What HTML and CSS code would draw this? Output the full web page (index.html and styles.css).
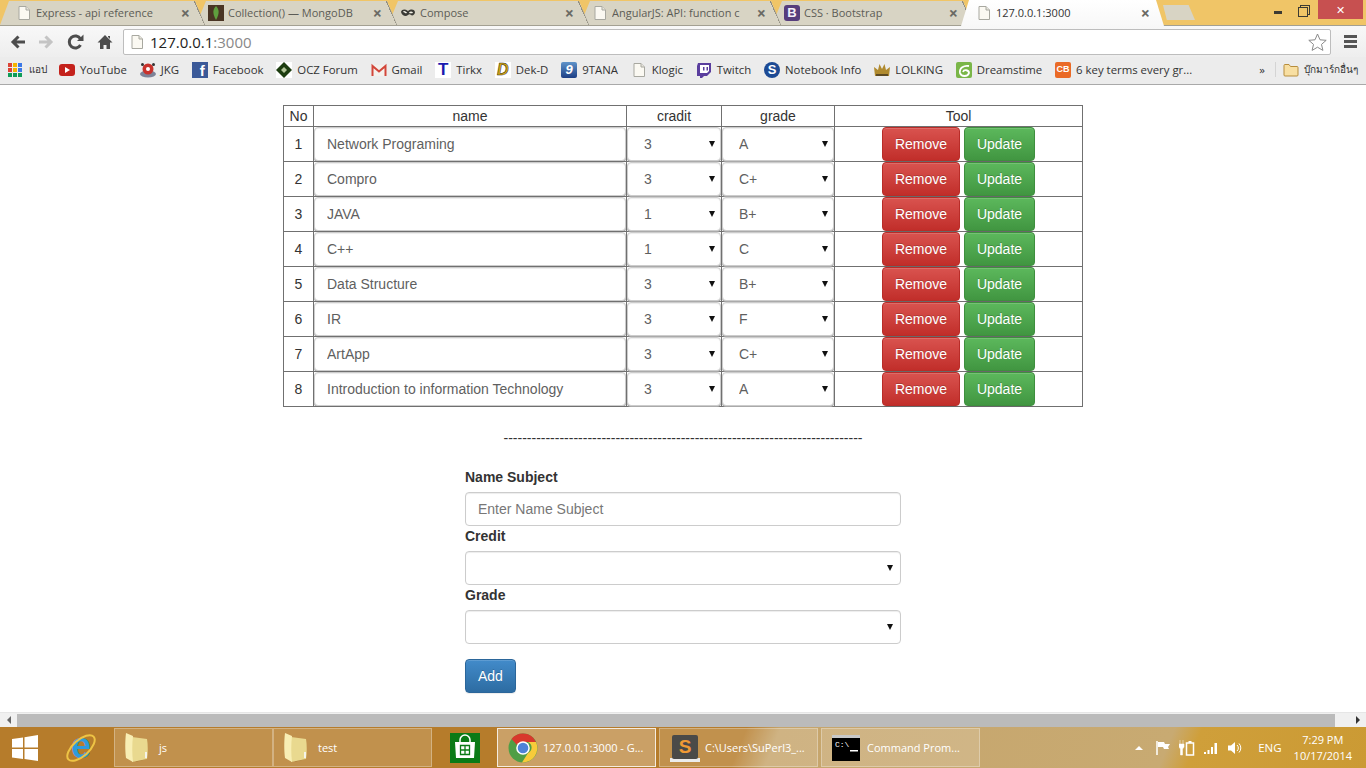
FILE: index.html
```html
<!DOCTYPE html>
<html>
<head>
  <meta charset="utf-8">
  <title>127.0.0.1:3000</title>
  <link rel="stylesheet" href="styles.css">
</head>
<body>
<svg class="defs" width="0" height="0">
  <symbol id="doc" viewBox="0 0 16 16"><path d="M3 1.5h7l3.500 3.500v9.500h-10.500z" fill="#fbf9f2" stroke="#a8a8a0"/><path d="M10 1.500v3.500h3.500" fill="#e8e6dc" stroke="#a8a8a0"/></symbol>
  <symbol id="folder" viewBox="0 0 24 32"><path d="M10 30l12-3-2-4z" fill="#8a5f24" opacity=".5"/><path d="M7 5l15 2c1 6 1 14 0 20l-15 3z" fill="#e9d98f"/><path d="M1 1l7 3c-1 8-1 18 0 26l-7-4c-1-7-1-17 0-25z" fill="#f8eeb4"/><rect x="20" y="20" width="2" height="6" fill="#f4f4ea"/></symbol>
</svg>

<div class="tabstrip">
  <div class="tab"><svg class="fav"><use href="#doc"/></svg><span class="tab-title">Express - api reference</span><span class="tab-x">×</span></div>
  <div class="tab"><svg class="fav" viewBox="0 0 16 16"><rect width="16" height="16" fill="#4a3524"/><path d="M8 1c3 3 4 7 0 14-4-7-3-11 0-14z" fill="#5f9e3e"/></svg><span class="tab-title">Collection() — MongoDB</span><span class="tab-x">×</span></div>
  <div class="tab"><svg class="fav" viewBox="0 0 16 16"><path d="M1 7c1-3 4-3 7-1 3-2 6-2 7 1 0 3-3 4-4 3-1-1-2-1-3 0-2 2-6 1-7-3z" fill="#3b3b36"/><path d="M3.500 7c1-1 2 0 3 1M9.500 8c1-1 2-1 3 0" stroke="#f4f2e8" stroke-width="1.500" fill="none"/></svg><span class="tab-title">Compose</span><span class="tab-x">×</span></div>
  <div class="tab"><svg class="fav"><use href="#doc"/></svg><span class="tab-title">AngularJS: API: function c</span><span class="tab-x">×</span></div>
  <div class="tab"><span class="fav fav-txt fav-boot">B</span><span class="tab-title">CSS · Bootstrap</span><span class="tab-x">×</span></div>
  <div class="tab tab-on"><svg class="fav"><use href="#doc"/></svg><span class="tab-title">127.0.0.1:3000</span><span class="tab-x">×</span></div>
  <div class="tab-new"></div>
  <div class="winbtns">
    <span class="win-min"></span>
    <span class="win-max"></span>
    <span class="win-close">✕</span>
  </div>
</div>

<div class="toolbar">
  <svg class="tool" width="16" height="16" viewBox="0 0 16 16"><path d="M15 8H4M8.500 2.500L3 8l5.500 5.500" stroke="#4d4d4d" stroke-width="3" fill="none"/></svg>
  <svg class="tool" width="16" height="16" viewBox="0 0 16 16"><path d="M1 8h11M7.500 2.500L13 8l-5.500 5.500" stroke="#c4c4c4" stroke-width="3" fill="none"/></svg>
  <svg class="tool" width="17" height="16" viewBox="0 0 17 16"><path d="M13.500 11a6 6 0 1 1 0-6" stroke="#4d4d4d" stroke-width="3" fill="none"/><path d="M10 7h6.500V.5z" fill="#4d4d4d"/></svg>
  <svg class="tool" width="16" height="16" viewBox="0 0 16 16"><path d="M8 1L0.500 8.500H3V15h3.500v-4h3v4H13V8.500h2.500zM11 2h2v3l-2-2z" fill="#4d4d4d"/></svg>
  <div class="omnibox">
    <svg class="fav"><use href="#doc"/></svg>
    <span class="url">127.0.0.1<span class="url-port">:3000</span></span>
    <svg class="star" width="19" height="18" viewBox="0 0 19 18"><path d="M9.500 1l2.500 5.800 6.200.5-4.700 4.100 1.400 6-5.400-3.200-5.400 3.200 1.400-6L.8 7.300 7 6.800z" fill="#fff" stroke="#8a8a8a"/></svg>
  </div>
  <div class="hamburger"><i></i><i></i><i></i></div>
</div>

<div class="bookmarks">
  <a class="bm bm-apps"><span class="apps-grid"><i></i><i></i><i></i><i></i><i></i><i></i><i></i><i></i><i></i></span>แอป</a>
  <a class="bm"><svg class="fav" viewBox="0 0 16 16"><rect y="2" width="16" height="12" rx="3" fill="#c4221c"/><path d="M6 5l5 3-5 3z" fill="#fff"/></svg>YouTube</a>
  <a class="bm"><svg class="fav" viewBox="0 0 16 16"><ellipse cx="8" cy="12" rx="8" ry="3.500" fill="#7d8398"/><circle cx="8" cy="7" r="5.500" fill="#c8322c"/><circle cx="8" cy="7" r="2" fill="#fff"/><circle cx="2.500" cy="2.500" r="1.500" fill="#333"/><circle cx="13.500" cy="2.500" r="1.500" fill="#333"/></svg>JKG</a>
  <a class="bm"><span class="fav fav-txt fav-fb">f</span>Facebook</a>
  <a class="bm"><svg class="fav" viewBox="0 0 16 16"><rect width="16" height="16" fill="#fff"/><path d="M8 0l8 8-8 8-8-8z" fill="#1d3d10"/><path d="M8 5l3 3-3 3-3-3z" fill="#b4c69a"/></svg>OCZ Forum</a>
  <a class="bm"><svg class="fav" viewBox="0 0 16 16"><path d="M0.500 3h15v11h-15z" fill="#f4f0ec"/><path d="M1.500 14V4L8 9.500 14.500 4v10" fill="none" stroke="#d2463a" stroke-width="2"/></svg>Gmail</a>
  <a class="bm"><span class="fav fav-txt fav-t">T</span>Tirkx</a>
  <a class="bm"><span class="fav fav-txt fav-dek">D</span>Dek-D</a>
  <a class="bm"><span class="fav fav-txt fav-9">9</span>9TANA</a>
  <a class="bm"><svg class="fav"><use href="#doc"/></svg>Klogic</a>
  <a class="bm"><svg class="fav" viewBox="0 0 16 16"><path d="M2 1h13v9l-4 4H8l-2 2H4v-2H1V4z" fill="#5a3e9e"/><path d="M4 3h9v6l-2 2H4z" fill="#fff"/><path d="M7 5h1.500v3.500H7zM10.500 5H12v3.500h-1.500z" fill="#5a3e9e"/></svg>Twitch</a>
  <a class="bm"><span class="fav fav-txt fav-s">S</span>Notebook Info</a>
  <a class="bm"><svg class="fav" viewBox="0 0 16 16"><path d="M1 14L0 5l4 3 1.500-6L8 7l2.500-5L12 8l4-3-1 9z" fill="#b08a2e"/><path d="M2 12h12v2H2z" fill="#5d4a22"/></svg>LOLKING</a>
  <a class="bm"><svg class="fav" viewBox="0 0 16 16"><rect width="16" height="16" rx="2" fill="#7ab648"/><path d="M13 4C8 3 3 6 4 11c1 4 8 4 9 0 0-3-5-4-6-1" fill="none" stroke="#fff" stroke-width="1.800"/></svg>Dreamstime</a>
  <a class="bm"><span class="fav fav-txt fav-cb">CB</span>6 key terms every gr...</a>
  <span class="bm-more">»</span>
  <a class="bm bm-other"><svg class="fav" viewBox="0 0 16 16"><path d="M1 3.500a1 1 0 0 1 1-1h4l1.500 2H14a1 1 0 0 1 1 1v7.500a1 1 0 0 1-1 1H2a1 1 0 0 1-1-1z" fill="#f8dfa2" stroke="#b78d3c"/></svg>บุ๊กมาร์กอื่นๆ</a>
</div>

<div class="page">
  <table class="grades">
    <thead>
      <tr><th class="col-no">No</th><th class="col-name">name</th><th class="col-credit">cradit</th><th class="col-grade">grade</th><th>Tool</th></tr>
    </thead>
    <tbody>
      <tr><td>1</td><td><input class="ctl" value="Network Programing"></td><td><div class="pick"><select class="ctl"><option>3</option></select></div></td><td><div class="pick"><select class="ctl"><option>A</option></select></div></td><td><button class="btn btn-red">Remove</button> <button class="btn btn-green">Update</button></td></tr>
      <tr><td>2</td><td><input class="ctl" value="Compro"></td><td><div class="pick"><select class="ctl"><option>3</option></select></div></td><td><div class="pick"><select class="ctl"><option>C+</option></select></div></td><td><button class="btn btn-red">Remove</button> <button class="btn btn-green">Update</button></td></tr>
      <tr><td>3</td><td><input class="ctl" value="JAVA"></td><td><div class="pick"><select class="ctl"><option>1</option></select></div></td><td><div class="pick"><select class="ctl"><option>B+</option></select></div></td><td><button class="btn btn-red">Remove</button> <button class="btn btn-green">Update</button></td></tr>
      <tr><td>4</td><td><input class="ctl" value="C++"></td><td><div class="pick"><select class="ctl"><option>1</option></select></div></td><td><div class="pick"><select class="ctl"><option>C</option></select></div></td><td><button class="btn btn-red">Remove</button> <button class="btn btn-green">Update</button></td></tr>
      <tr><td>5</td><td><input class="ctl" value="Data Structure"></td><td><div class="pick"><select class="ctl"><option>3</option></select></div></td><td><div class="pick"><select class="ctl"><option>B+</option></select></div></td><td><button class="btn btn-red">Remove</button> <button class="btn btn-green">Update</button></td></tr>
      <tr><td>6</td><td><input class="ctl" value="IR"></td><td><div class="pick"><select class="ctl"><option>3</option></select></div></td><td><div class="pick"><select class="ctl"><option>F</option></select></div></td><td><button class="btn btn-red">Remove</button> <button class="btn btn-green">Update</button></td></tr>
      <tr><td>7</td><td><input class="ctl" value="ArtApp"></td><td><div class="pick"><select class="ctl"><option>3</option></select></div></td><td><div class="pick"><select class="ctl"><option>C+</option></select></div></td><td><button class="btn btn-red">Remove</button> <button class="btn btn-green">Update</button></td></tr>
      <tr><td>8</td><td><input class="ctl" value="Introduction to information Technology"></td><td><div class="pick"><select class="ctl"><option>3</option></select></div></td><td><div class="pick"><select class="ctl"><option>A</option></select></div></td><td><button class="btn btn-red">Remove</button> <button class="btn btn-green">Update</button></td></tr>
    </tbody>
  </table>

  <div class="dashes">-----------------------------------------------------------------------------</div>

  <form class="add-form">
    <label>Name Subject</label>
    <input class="ctl ctl-form" placeholder="Enter Name Subject">
    <label>Credit</label>
    <div class="pick"><select class="ctl ctl-form"><option></option></select></div>
    <label>Grade</label>
    <div class="pick"><select class="ctl ctl-form"><option></option></select></div>
    <button type="button" class="btn btn-blue">Add</button>
  </form>
</div>

<div class="hscroll">
  <span class="arrow-left"></span>
  <div class="hscroll-track"><div class="hscroll-thumb"></div></div>
  <span class="arrow-right"></span>
</div>

<div class="taskbar">
  <svg class="win-logo" width="26" height="26" viewBox="0 0 26 26"><path d="M0 4l11-1.500V12.500H0zM12.500 2.200L26 0v12.500H12.500zM0 14h11v10L0 22.500zM12.500 14H26v12l-13.500-2z" fill="#fff"/></svg>
  <svg class="ie-logo" width="30" height="32" viewBox="0 0 30 32"><text x="15" y="26" text-anchor="middle" class="ie-e">e</text><ellipse cx="15" cy="16" rx="17" ry="8" transform="rotate(-42 15 16)" fill="none" stroke="#eec445" stroke-width="2"/></svg>
  <div class="task task-first"><svg class="task-folder"><use href="#folder"/></svg><span>js</span></div>
  <div class="task"><svg class="task-folder"><use href="#folder"/></svg><span>test</span></div>
  <svg class="store" width="30" height="30" viewBox="0 0 30 30"><rect width="30" height="30" fill="#0b7a16"/><path d="M10 9V7a5 5 0 0 1 10 0v2" fill="none" stroke="#fff" stroke-width="1.500"/><path d="M5 9h20l-1 16H6z" fill="#fff"/><path d="M10.500 12.500h9v9h-9zM15 12.500v9M10.500 17h9" fill="none" stroke="#0b7a16" stroke-width="1.300"/></svg>
  <div class="task task-on task-gap">
    <svg class="task-ico" width="30" height="30" viewBox="0 0 30 30"><circle cx="15" cy="15" r="14.500" fill="#4f9e45"/><path d="M15 .5A14.500 14.500 0 0 1 28 9H15a6 6 0 0 0-6 3L3.500 6A14.500 14.500 0 0 1 15 .5z" fill="#d8382c"/><path d="M28 9a14.500 14.500 0 0 1-14 20.500L20 20a6 6 0 0 0 0-11z" fill="#f7cb3a"/><circle cx="15" cy="15" r="6.800" fill="#fff"/><circle cx="15" cy="15" r="5.300" fill="#4d83d8"/></svg>
    <span>127.0.0.1:3000 - G...</span>
  </div>
  <div class="task task-gap">
    <svg class="task-ico" width="30" height="30" viewBox="0 0 30 30"><path d="M0 25h30v4H0z" fill="#ececec"/><rect x="2" y="2" width="26" height="24" rx="2" fill="#4a4a48"/><text x="15" y="20" text-anchor="middle" class="sublime-s">S</text></svg>
    <span>C:\Users\SuPerl3_...</span>
  </div>
  <div class="task">
    <svg class="task-ico" width="30" height="30" viewBox="0 0 30 30"><rect y="2" width="28" height="26" fill="#000"/><rect y="2" width="28" height="3" fill="#c8c8c8"/><path d="M18 17h8v1.500h-8z" fill="#fff"/></svg>
    <span class="cmd-prompt">C:\</span>
    <span>Command Prom...</span>
  </div>
  <div class="tray">
    <span class="tray-up"></span>
    <svg width="16" height="16" viewBox="0 0 16 16"><path d="M2 1v14" stroke="#fff" stroke-width="1.500"/><path d="M3 2h6l1 2h5l-2 3 1 2H9L8 7H3z" fill="#fff"/></svg>
    <svg width="16" height="16" viewBox="0 0 16 16"><path d="M1 0v4M4 0v4M0 4h5v3L3.500 9v6h-2V9L0 7z" fill="#fff" stroke="#fff" stroke-width=".5"/><path d="M7.500 3h7v12h-7z" fill="none" stroke="#fff" stroke-width="1.500"/><path d="M9.500 1h3v2h-3z" fill="#fff"/></svg>
    <svg width="16" height="16" viewBox="0 0 16 16"><path d="M1 12h2v2H1zM4.500 10h2v4h-2zM8 7h2v7H8zM11.500 3h2.500v11h-2.500z" fill="#fff"/></svg>
    <svg width="16" height="16" viewBox="0 0 16 16"><path d="M1 5.500h3L8 2v12l-4-3.500H1z" fill="#fff"/><path d="M10 5a4 4 0 0 1 0 6M12 3.500a6.500 6.500 0 0 1 0 9" fill="none" stroke="#fff"/></svg>
    <span class="tray-lang">ENG</span>
    <div class="clock"><div>7:29 PM</div><div>10/17/2014</div></div>
  </div>
</div>
</body>
</html>
```

FILE: styles.css
```css
* { box-sizing: border-box; }
html, body { height: 100%; }
body { margin: 0; display: flex; flex-direction: column; height: 768px; overflow: hidden; font-family: "Liberation Sans", Arial, sans-serif; font-size: 14px; color: #333; background: #fff; }
.defs { position: absolute; }
.fav { width: 16px; height: 16px; flex: none; display: block; }

/* tabs */
.tabstrip { height: 26px; flex: none; display: flex; align-items: flex-end; background: #f0c567; border-bottom: 1px solid #a3a092; font-family: "Open Sans", "Noto Sans", sans-serif; font-size: 11px; }
.tab { width: 205px; height: 24px; margin-right: -13px; padding: 0 15px 1px 16px; display: flex; align-items: center; color: #5c5c56; clip-path: polygon(4px 100%, 14px 0, 195px 0, 100% 100%); flex: none; position: relative; background: linear-gradient(to bottom left, transparent 46%, #8f8c80 46%, #8f8c80 52%, transparent 52%) no-repeat right top / 11px 24px, #d8d4c4; }
.tab:nth-child(1) { z-index: 5; clip-path: polygon(0 100%, 9px 0, 195px 0, 100% 100%); }
.tab:nth-child(2) { z-index: 4; }
.tab:nth-child(3) { z-index: 3; }
.tab:nth-child(4) { z-index: 2; }
.tab:nth-child(5) { z-index: 1; }
.tab-title { margin-left: 4px; width: 134px; white-space: nowrap; overflow: hidden; }
.tab-x { margin-left: auto; font-size: 16px; font-weight: 700; color: #6a6a64; line-height: 1; }
.tab-on { background: linear-gradient(#fff, #f8f8f8); color: #333; height: 26px; margin-bottom: -1px; padding-bottom: 1px; z-index: 6; clip-path: polygon(1px 100%, 9px 0, 196px 0, 204px 100%); }
.tab-new { width: 32px; height: 15px; margin-left: 11px; margin-bottom: 5px; background: #d8d4c4; clip-path: polygon(0 0, 80% 0, 100% 100%, 12% 100%); flex: none; }
.winbtns { margin-left: auto; align-self: flex-start; display: flex; align-items: flex-start; padding-right: 3px; }
.win-min { width: 8px; height: 3px; background: #3c3a32; margin: 11px 16px 0 0; }
.win-max { width: 10px; height: 10px; border: 1px solid #3c3a32; box-shadow: 2px -2px 0 -1px #f0c567, 2px -2px 0 0 #3c3a32; margin: 7px 10px 0 0; }
.win-close { width: 45px; height: 19px; background: #c75050; color: #fff; text-align: center; line-height: 19px; font-size: 11px; }
.fav-txt { display: flex; align-items: center; justify-content: center; font-family: "Liberation Sans", sans-serif; font-weight: 700; font-size: 13px; line-height: 1; }
.fav-boot { background: #563d7c; color: #f4f0f8; border-radius: 3px; }
.fav-fb { background: #3b5998; color: #fff; align-items: flex-end; justify-content: flex-end; padding-right: 3px; font-size: 15px; }
.fav-t { background: #fff; color: #1a1ab0; font-size: 17px; }
.fav-dek { background: #fff; color: #d9a90f; font-size: 16px; font-style: italic; -webkit-text-stroke: .5px #222; }
.fav-9 { background: linear-gradient(#5f93c9, #1d3f85); color: #fff; font-style: italic; border-radius: 2px; }
.fav-s { background: #1d4a94; color: #fff; border-radius: 50%; }
.fav-cb { background: #ea6a26; color: #fff; font-size: 9px; border-radius: 2px; }

/* toolbar */
.toolbar { height: 31px; flex: none; display: flex; align-items: center; padding: 0 9px 0 10px; background: linear-gradient(#f8f8f8, #eeeeee); }
.tool { margin-right: 13px; flex: none; }
.tool:first-child { margin-right: 12px; }
.tool:nth-child(4) { margin-right: 10px; }
.omnibox { flex: 1; height: 26px; margin-right: 13px; display: flex; align-items: center; padding: 0 3px 0 5px; background: #fff; border: 1px solid #bdbdbd; border-radius: 2px; }
.url { margin-left: 5px; font-family: "Open Sans", "Noto Sans", sans-serif; font-size: 15px; color: #222; }
.url-port { color: #888; }
.star { margin-left: auto; }
.hamburger { width: 13px; display: flex; flex-direction: column; gap: 2px; }
.hamburger i { height: 3px; background: #555; }

/* bookmarks */
.bookmarks { height: 28px; flex: none; display: flex; align-items: center; padding: 0 8px 2px; gap: 12.8px; background: #ececec; border-bottom: 1px solid #a9a9a9; font-family: "Open Sans", "Noto Sans", sans-serif; font-size: 11.4px; color: #333; white-space: nowrap; }
.bm { display: flex; align-items: center; gap: 5px; }
.apps-grid { width: 14px; height: 14px; display: grid; grid-template-columns: repeat(3, 4px); gap: 1px; flex: none; }
.apps-grid i:nth-child(3n) { background: #3b78e7; }
.apps-grid i:nth-child(3n+1) { background: #db4437; }
.apps-grid i:nth-child(3n+2) { background: #f4b400; }
.apps-grid i:nth-child(n+7) { background: #0f9d58; }
.bm-apps { font-size: 10px; gap: 7px; margin-right: -.8px; }
.bm-more { margin-left: auto; margin-right: -6px; border-right: 1px solid #d4d4d4; width: 17px; }
.bm-other { font-size: 10px; }

/* page */
.page { flex: 1; min-height: 0; padding-top: 20px; overflow: hidden; }
.grades { width: 800px; margin: 0 auto; border-collapse: collapse; table-layout: fixed; border: 1px solid #111; }
.grades th, .grades td { border: 1px solid #707070; padding: 0; text-align: center; font-weight: 400; line-height: 20px; }
.col-no { width: 30px; }
.col-name { width: 313px; }
.col-credit { width: 95px; }
.col-grade { width: 113px; }
.ctl { display: block; width: 100%; height: 34px; padding: 6px 12px; font: 14px/20px "Liberation Sans", Arial, sans-serif; color: #5f5f5f; background: #fff; border: 1px solid #ccc; border-radius: 4px; box-shadow: inset 0 1px 1px rgba(0,0,0,.075), 0 1px 0 #aaa; outline: none; }
select.ctl { appearance: none; -webkit-appearance: none; padding-left: 16px; }
.ctl-form { box-shadow: inset 0 1px 1px rgba(0,0,0,.075); }
.ctl::placeholder { color: #777; }
.pick { position: relative; }
.pick::after { content: ""; position: absolute; right: 8px; top: 14px; border-left: 3px solid transparent; border-right: 3px solid transparent; border-top: 6px solid #111; }
.grades .pick::after { right: 6px; }
.btn { display: inline-block; height: 34px; padding: 6px 12px; font: 14px/20px "Liberation Sans", Arial, sans-serif; color: #fff; border: 1px solid; border-radius: 4px; vertical-align: top; text-shadow: 0 -1px 0 rgba(0,0,0,.2); box-shadow: inset 0 1px 0 rgba(255,255,255,.15), 0 1px 1px rgba(0,0,0,.075); }
.btn-red { background: linear-gradient(#d9534f, #c12e2a); border-color: #b92c28; }
.btn-green { background: linear-gradient(#5cb85c, #419641); border-color: #3e8f3e; }
.btn-blue { background: linear-gradient(#428bca, #2d6ca2); border-color: #2b669a; margin-top: 15px; }
.dashes { margin-top: 21px; text-align: center; line-height: 20px; color: #333; }
.add-form { width: 436px; margin: 19px auto 0; }
.add-form label { display: block; font-weight: 700; line-height: 20px; margin-bottom: 5px; }

/* scrollbar */
.hscroll { height: 15px; flex: none; display: flex; align-items: center; background: #f0f0f0; border-top: 1px solid #e6e6e6; }
.hscroll-track { flex: 1; height: 13px; }
.hscroll-thumb { width: 1318px; height: 100%; background: #bbb; }
.arrow-left, .arrow-right { width: 17px; display: flex; justify-content: center; }
.arrow-left::before { content: ""; border-right: 4px solid #666; border-top: 4px solid transparent; border-bottom: 4px solid transparent; }
.arrow-right::before { content: ""; border-left: 4px solid #333; border-top: 4px solid transparent; border-bottom: 4px solid transparent; }

/* taskbar */
.taskbar { height: 41px; flex: none; display: flex; align-items: stretch; padding: 1px 0 1px 12px; color: #fff; font-family: "Open Sans", "Noto Sans", sans-serif; font-size: 11px; background: linear-gradient(112deg, #b67c2b 0, #b67c2b 54%, #c6a56c 56.500%, #c8aa72 85%, #cf9f3a 87%, #cb9a34 100%); }
.win-logo { margin-top: 7px; flex: none; }
.ie-logo { margin: 4px 0 0 28px; flex: none; overflow: visible; }
.ie-e { font: 700 36px "Liberation Sans", sans-serif; fill: #2f9bdc; }
.sublime-s { font: 700 19px "Liberation Sans", sans-serif; fill: #f09a35; }
.task { width: 159px; display: flex; align-items: center; padding-left: 10px; gap: 5px; background: rgba(255,255,255,.16); border: 1px solid rgba(255,255,255,.3); flex: none; white-space: nowrap; position: relative; }
.task-first { margin-left: 18px; }
.task-folder { width: 24px; height: 32px; flex: none; margin-right: 5px; }
.store { margin: 5px 17px 0 18px; flex: none; }
.task-on { background: rgba(255,255,255,.28); border-color: rgba(255,255,255,.8); }
.task-gap { margin-right: 3px; }
.task-ico { flex: none; }
.cmd-prompt { position: absolute; left: 13px; top: 11px; font: 8px "Liberation Mono", monospace; }
.tray { margin-left: auto; display: flex; align-items: center; gap: 8px; padding-right: 14px; }
.tray-up { width: 0; border-left: 4px solid transparent; border-right: 4px solid transparent; border-bottom: 4px solid #fff; margin-right: 4px; }
.tray-lang { margin-left: 7px; font-size: 11.500px; }
.clock { text-align: center; line-height: 16px; margin-left: 4px; padding-top: 1px; }
```
